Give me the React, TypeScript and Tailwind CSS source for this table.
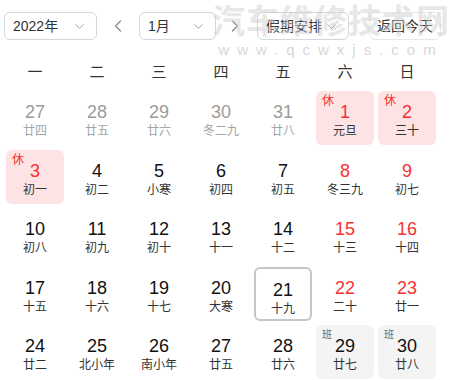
import { ChevronDown, ChevronLeft, ChevronRight } from 'lucide-react';

type Day = {
    n: number;
    lunar: string;
    other?: boolean;
    red?: boolean;
    tag?: '休' | '班';
    today?: boolean;
};

const weeks: Day[][] = [
    [
        { n: 27, lunar: '廿四', other: true },
        { n: 28, lunar: '廿五', other: true },
        { n: 29, lunar: '廿六', other: true },
        { n: 30, lunar: '冬二九', other: true },
        { n: 31, lunar: '廿八', other: true },
        { n: 1, lunar: '元旦', red: true, tag: '休' },
        { n: 2, lunar: '三十', red: true, tag: '休' },
    ],
    [
        { n: 3, lunar: '初一', red: true, tag: '休' },
        { n: 4, lunar: '初二' },
        { n: 5, lunar: '小寒' },
        { n: 6, lunar: '初四' },
        { n: 7, lunar: '初五' },
        { n: 8, lunar: '冬三九', red: true },
        { n: 9, lunar: '初七', red: true },
    ],
    [
        { n: 10, lunar: '初八' },
        { n: 11, lunar: '初九' },
        { n: 12, lunar: '初十' },
        { n: 13, lunar: '十一' },
        { n: 14, lunar: '十二' },
        { n: 15, lunar: '十三', red: true },
        { n: 16, lunar: '十四', red: true },
    ],
    [
        { n: 17, lunar: '十五' },
        { n: 18, lunar: '十六' },
        { n: 19, lunar: '十七' },
        { n: 20, lunar: '大寒' },
        { n: 21, lunar: '十九', today: true },
        { n: 22, lunar: '二十', red: true },
        { n: 23, lunar: '廿一', red: true },
    ],
    [
        { n: 24, lunar: '廿二' },
        { n: 25, lunar: '北小年' },
        { n: 26, lunar: '南小年' },
        { n: 27, lunar: '廿五' },
        { n: 28, lunar: '廿六' },
        { n: 29, lunar: '廿七', tag: '班' },
        { n: 30, lunar: '廿八', tag: '班' },
    ],
];

const weekdays = ['一', '二', '三', '四', '五', '六', '日'];

const Select = ({ label, className }: { label: string; className: string }) => (
    <div
        className={`flex h-[28px] items-center justify-between rounded-[6px] border border-[#d4d6db] bg-white pl-[8px] pr-[9px] text-[14px] text-[#333] ${className}`}
    >
        <span>{label}</span>
        <ChevronDown size={15} strokeWidth={1.5} className="text-[#9a9a9a]" />
    </div>
);

const DayCell = ({ day }: { day: Day }) => {
    let bg = '';
    if (day.tag === '休') bg = 'bg-[#fde3e4]';
    if (day.tag === '班') bg = 'bg-[#f4f4f5]';
    const numColor = day.other ? 'text-[#9b9b9b]' : day.red ? 'text-[#f73131]' : 'text-[#111]';
    const lunarColor = day.other ? 'text-[#a5a5a5]' : 'text-[#333]';

    return (
        <div
            className={`relative flex h-[54px] flex-col items-center rounded-[6px] pt-[11px] ${bg} ${
                day.today ? 'border-2 border-[#c3c6cd] pt-[9px]' : ''
            }`}
        >
            {day.tag === '休' && (
                <span className="absolute left-[6px] top-[3px] text-[12px] leading-[14px] text-[#f73131]">休</span>
            )}
            {day.tag === '班' && (
                <span className="absolute left-[6px] top-[4px] text-[10px] leading-[12px] text-[#666]">班</span>
            )}
            <span className={`text-[18px] leading-[20px] ${numColor}`}>{day.n}</span>
            <span className={`mt-[1px] text-[12px] leading-[16px] ${lunarColor}`}>{day.lunar}</span>
        </div>
    );
};

export default function App() {
    return (
        <div
            className="relative h-[380px] w-[450px] overflow-hidden bg-white"
            style={{ fontFamily: '"Liberation Sans", "Noto Sans CJK SC", sans-serif' }}
        >
            {/* toolbar */}
            <div className="flex items-center pl-[4px] pt-[12px]">
                <Select label="2022年" className="w-[93px]" />
                <ChevronLeft size={20} strokeWidth={1.5} className="ml-[11px] text-[#8a8a8a]" />
                <Select label="1月" className="ml-[11px] w-[77px]" />
                <ChevronRight size={20} strokeWidth={1.5} className="ml-[9px] text-[#8a8a8a]" />
                <Select label="假期安排" className="ml-[12px] w-[92px]" />
                <div className="ml-[20px] flex h-[28px] w-[72px] items-center justify-center rounded-[6px] border border-[#e6e7ea] text-[14px] text-[#333]">
                    返回今天
                </div>
            </div>

            {/* weekday header */}
            <div className="ml-[6px] mt-[22px] grid grid-cols-[repeat(7,58px)] gap-x-[4px]">
                {weekdays.map((w) => (
                    <div key={w} className="text-center text-[15px] leading-[20px] text-[#333]">
                        {w}
                    </div>
                ))}
            </div>

            {/* days */}
            <div className="ml-[6px] mt-[9px] grid grid-cols-[repeat(7,58px)] gap-x-[4px] gap-y-[4.5px]">
                {weeks.flat().map((d, i) => (
                    <DayCell key={i} day={d} />
                ))}
            </div>

            {/* watermark */}
            <div className="pointer-events-none absolute left-[212px] top-[2px] flex flex-col items-center">
                <div className="text-[33px] font-bold leading-[40px] tracking-[1px] text-[#d0d0d0]/50">
                    汽车维修技术网
                </div>
                <div className="text-[15px] leading-[16px] tracking-[8px] text-[#c4c4c4]/70">www.qcwxjs.com</div>
            </div>
        </div>
    );
}
